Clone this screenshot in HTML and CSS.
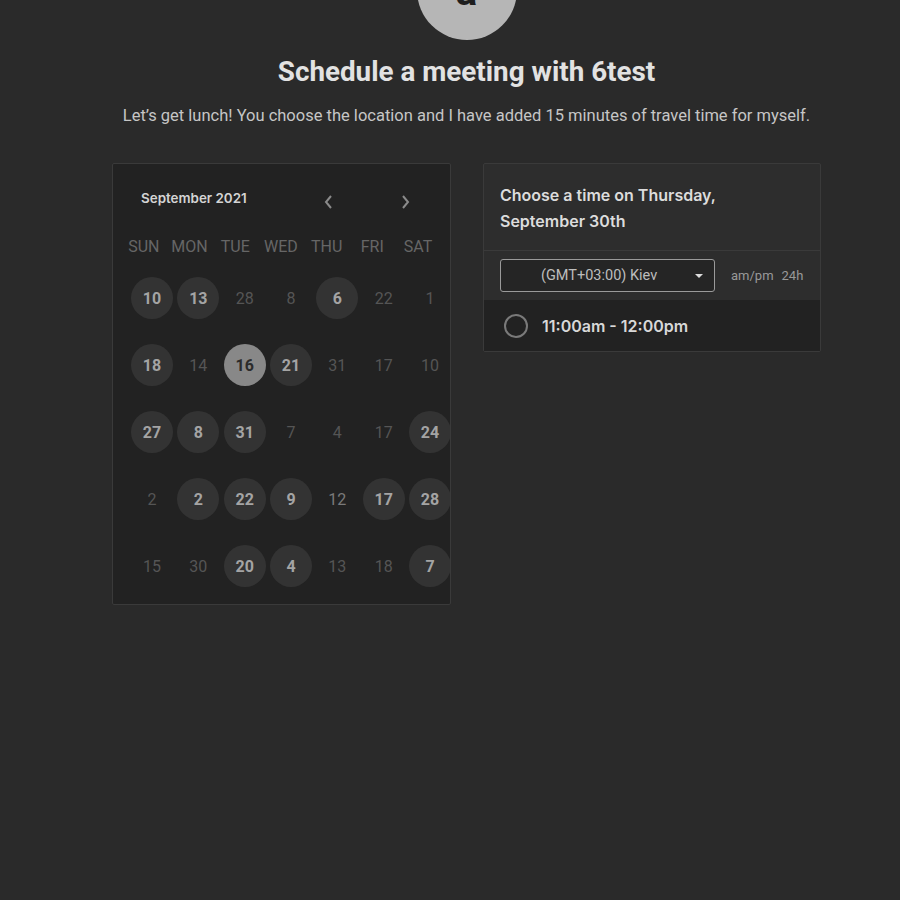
FILE: index.html
```html
<!DOCTYPE html>
<html>
<head>
<meta charset="utf-8">
<link rel="stylesheet" href="styles.css">
</head>
<body>
<div class="page">
  <div class="avatar"><span class="avatar-letter">a</span></div>
  <h1 class="title">Schedule a meeting with 6test</h1>
  <p class="subtitle">Let’s get lunch! You choose the location and I have added 15 minutes of travel time for myself.</p>
  <div class="cards">
    <div class="calendar">
      <div class="cal-head">
        <span class="month">September 2021</span>
        <span class="nav">
          <svg class="chev" width="12" height="16" viewBox="0 0 12 16"><path d="M8 2 L3 8 L8 14" fill="none" stroke="#8a8a8a" stroke-width="2"/></svg>
          <svg class="chev" width="12" height="16" viewBox="0 0 12 16"><path d="M4 2 L9 8 L4 14" fill="none" stroke="#8a8a8a" stroke-width="2"/></svg>
        </span>
      </div>
      <div class="weekdays">
        <span>SUN</span><span>MON</span><span>TUE</span><span>WED</span><span>THU</span><span>FRI</span><span>SAT</span>
      </div>
      <div class="days">
        <span class="day avail">10</span><span class="day avail">13</span><span class="day">28</span><span class="day">8</span><span class="day avail">6</span><span class="day">22</span><span class="day">1</span>
        <span class="day avail">18</span><span class="day">14</span><span class="day selected">16</span><span class="day avail">21</span><span class="day">31</span><span class="day">17</span><span class="day">10</span>
        <span class="day avail">27</span><span class="day avail">8</span><span class="day avail">31</span><span class="day">7</span><span class="day">4</span><span class="day">17</span><span class="day avail">24</span>
        <span class="day">2</span><span class="day avail">2</span><span class="day avail">22</span><span class="day avail">9</span><span class="day lighter">12</span><span class="day avail">17</span><span class="day avail">28</span>
        <span class="day">15</span><span class="day">30</span><span class="day avail">20</span><span class="day avail">4</span><span class="day">13</span><span class="day">18</span><span class="day avail">7</span>
      </div>
    </div>
    <div class="times">
      <div class="times-head">Choose a time on Thursday, September 30th</div>
      <div class="tz-row">
        <div class="tz-select">
          <span>(GMT+03:00) Kiev</span>
          <span class="caret"></span>
        </div>
        <div class="fmt"><span>am/pm</span><span>24h</span></div>
      </div>
      <div class="slot">
        <span class="radio"></span>
        <span class="slot-text">11:00am - 12:00pm</span>
      </div>
    </div>
  </div>
</div>
</body>
</html>
```

FILE: styles.css
```css
html, body {
  margin: 0;
  padding: 0;
  background: #2a2a2a;
  height: 100%;
}
body {
  font-family: Roboto, "Liberation Sans", sans-serif;
  color: #ddd;
  overflow: hidden;
}
.page {
  width: 709px;
  margin-left: 112px;
  display: flex;
  flex-direction: column;
  align-items: center;
}
.avatar {
  width: 100px;
  height: 100px;
  border-radius: 50%;
  background: #b6b6b6;
  margin-top: -60px;
  display: flex;
  justify-content: center;
  align-items: flex-start;
  overflow: hidden;
}
.avatar-letter {
  font-family: Roboto, sans-serif;
  font-weight: 700;
  font-size: 40px;
  line-height: 40px;
  color: #1e1e1e;
  margin-top: 32px;
}
.title {
  margin: 16px 0 0;
  font-family: Roboto, sans-serif;
  font-weight: 700;
  font-size: 27.8px;
  line-height: 32px;
  color: #e2e2e2;
}
.subtitle {
  margin: 16px 0 0;
  font-size: 16.5px;
  line-height: 24px;
  color: #c6c6c6;
  white-space: nowrap;
}
.cards {
  margin-top: 35px;
  width: 100%;
  display: flex;
  gap: 32px;
  align-items: flex-start;
}
.calendar {
  width: 339px;
  box-sizing: border-box;
  border: 1px solid #3a3a3a;
  border-radius: 2px;
  background: #222222;
  overflow: hidden;
  padding: 23px 0 17px;
}
.cal-head {
  height: 22px;
  display: flex;
  align-items: center;
  padding-left: 28px;
}
.month {
  font-family: Inter, sans-serif;
  font-weight: 600;
  font-size: 13.4px;
  color: #d4d4d4;
  width: 182px;
}
.nav {
  display: flex;
  gap: 64px;
  margin-top: 7px;
}
.weekdays {
  margin-top: 28px;
  display: grid;
  grid-template-columns: repeat(7, 45.7px);
  padding-left: 8px;
  height: 20px;
  line-height: 20px;
  font-size: 16px;
  color: #666;
  text-align: center;
}
.days {
  margin-top: 20px;
  margin-left: 18px;
  display: grid;
  grid-template-columns: repeat(7, 42px);
  column-gap: 4.33px;
  row-gap: 25px;
  grid-auto-rows: 42px;
  width: 320px;
}
.day {
  display: flex;
  align-items: center;
  justify-content: center;
  border-radius: 50%;
  font-size: 16px;
  color: #555;
}
.day.lighter {
  color: #7a7a7a;
}
.day.avail {
  background: #333333;
  color: #a4a4a4;
  font-weight: 700;
}
.day.selected {
  background: #888888;
  color: #2b2b2b;
  font-weight: 700;
}
.times {
  width: 338px;
  box-sizing: border-box;
  border: 1px solid #3a3a3a;
  border-radius: 2px;
  background: #2d2d2d;
}
.times-head {
  padding: 18px 40px 16px 16px;
  font-family: Inter, sans-serif;
  font-weight: 600;
  font-size: 16px;
  line-height: 26px;
  color: #dcdcdc;
  border-bottom: 1px solid #3a3a3a;
}
.tz-row {
  display: flex;
  align-items: center;
  padding: 8px 0 8px 16px;
}
.tz-select {
  width: 215px;
  height: 33px;
  box-sizing: border-box;
  border: 1px solid #9a9a9a;
  border-radius: 3px;
  background: #252525;
  display: flex;
  align-items: center;
  padding-left: 40px;
  font-size: 14.5px;
  color: #bdbdbd;
  position: relative;
}
.caret {
  position: absolute;
  right: 11px;
  top: 14px;
  width: 0;
  height: 0;
  border-left: 4px solid transparent;
  border-right: 4px solid transparent;
  border-top: 4px solid #dcdcdc;
}
.fmt {
  margin-left: 16px;
  display: flex;
  gap: 8px;
  font-size: 13px;
  color: #999;
}
.slot {
  height: 51px;
  background: #222222;
  display: flex;
  align-items: center;
  padding-left: 20px;
}
.radio {
  width: 24px;
  height: 24px;
  box-sizing: border-box;
  border: 2px solid #7a7a7a;
  border-radius: 50%;
}
.slot-text {
  margin-left: 14px;
  font-family: Inter, sans-serif;
  font-weight: 600;
  font-size: 16px;
  color: #d8d8d8;
}
```
